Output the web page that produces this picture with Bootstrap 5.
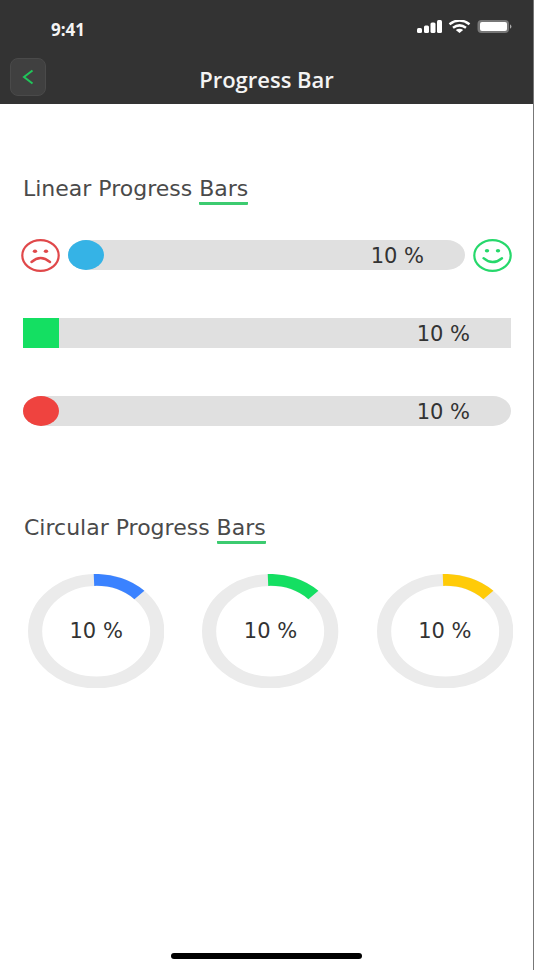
<!DOCTYPE html>
<html lang="en">
<head>
<meta charset="utf-8">
<meta name="viewport" content="width=device-width, initial-scale=1">
<title>Progress Bar</title>
<link href="https://cdn.jsdelivr.net/npm/bootstrap@5.3.0/dist/css/bootstrap.min.css" rel="stylesheet">
<style>
  body { font-family: "DejaVu Sans", sans-serif; color: #333; background: #fff; }
  .screen { border-right: 1px solid #777; }
  .topbar { background: #333; color: #fff; height: 104px; }
  .status { height: 58px; padding: 20px 20px 0 51px; }
  .clock { font: 700 17px/20px "Open Sans", sans-serif; color: #f4f4f4; }
  .titlebar { padding: 0 10px; display: grid; grid-template-columns: 36px 1fr 36px; height: 38px; }
  .back { width: 36px; height: 38px; background: #404040; border: 1px solid #4a4a4a; border-radius: 8px; }
  .page-title { font: 600 22px/38px "Open Sans", sans-serif; color: #f4f4f4; padding-top: 2px; }
  .linear { padding: 72px 22px 0 23px; }
  .circular { padding: 89px 20px 0 28px; }
  .section-title { font-size: 22px; line-height: 26px; color: #4a4a4a; }
  .underlined { border-bottom: 3px solid #3ccb70; border-radius: 1px; display: inline-block; }
  .circular .section-title { margin-left: -4px; }
  .meters { display: grid; gap: 48px; margin-top: 35px; }
  .with-faces { margin: 0 -1px 0 -2px; gap: 8px; }
  .face { flex: none; margin: -2px 0; }
  .meter { height: 30px; background: #e0e0e0; border-radius: 18px / 15px; overflow: visible; }
  .meter.square, .meter.square .progress-bar { border-radius: 0; }
  .meter .progress-bar { border-radius: 50%; min-width: 36px; }
  .reading { font-size: 21px; line-height: 32px; color: #333; }
  .meter .reading { margin: 0 41px 0 auto; }
  .sky { background: #35b3e6; } .leaf { background: #14df62; } .coral { background: #ef433f; }
  .rings { gap: 38px; margin-top: 30px; }
  .ring { position: relative; aspect-ratio: 137 / 115; }
  .ring svg { width: 100%; height: 100%; display: block; }
  .ring .reading { position: absolute; inset: 0; }
  .home { width: 191px; height: 6px; border-radius: 3px; background: #000; margin-bottom: 11px; }
</style>
</head>
<body>
<div class="screen min-vh-100 d-flex flex-column">
  <header class="topbar">
    <div class="status d-flex justify-content-between align-items-start">
      <span class="clock">9:41</span>
      <svg width="96" height="15" viewBox="0 0 96 15" fill="#fff" aria-hidden="true">
        <rect x="0" y="8" width="5" height="5" rx="1.5"/><rect x="7" y="5.500" width="5" height="7.500" rx="1.500"/><rect x="13.500" y="2.500" width="5" height="10.500" rx="1.500"/><rect x="20" y="0" width="5" height="13" rx="1.500"/>
        <g fill="none" stroke="#fff" stroke-width="2.500"><path d="M32.500 4.300Q42.500-3.200 52.500 4.300M36 7.700Q42.500 3 49 7.700"/></g>
        <path d="M38.800 10Q42.500 7.400 46.200 10L42.500 13Z"/>
        <rect x="60.500" y="0" width="31.500" height="13" rx="4" fill="#777"/><rect x="63" y="2" width="27" height="9" rx="2"/><path d="M93 4.200Q96 6.500 93 8.800Z" fill="#aaa"/>
      </svg>
    </div>
    <div class="titlebar">
      <button class="back p-0 d-flex align-items-center justify-content-center" type="button" aria-label="Back">
        <svg width="12" height="16" viewBox="0 0 12 16" fill="none" stroke="#20c65a" stroke-width="2"><path d="M10.500 1.500L2 8L10.500 14.500"/></svg>
      </button>
      <h1 class="page-title m-0 text-center">Progress Bar</h1>
    </div>
  </header>
  <main class="flex-grow-1">
    <section class="linear">
      <h2 class="section-title m-0 fw-normal">Linear Progress <span class="underlined">Bars</span></h2>
      <div class="meters">
        <div class="with-faces d-flex align-items-center">
          <svg class="face" width="39" height="33" viewBox="0 0 39 33" fill="none" stroke="#e0484a" stroke-width="2.200" aria-hidden="true"><ellipse cx="19.500" cy="16.500" rx="18.200" ry="15.300"/><path d="M10.500 23Q19.500 15 29 23" stroke-width="2.400" stroke-linecap="round"/><g fill="#e0484a" stroke="none"><ellipse cx="14" cy="12.300" rx="2.200" ry="1.800"/><ellipse cx="25" cy="12.300" rx="2.200" ry="1.800"/></g></svg>
          <div class="progress meter flex-grow-1" role="progressbar" aria-label="Mood" aria-valuenow="10" aria-valuemin="0" aria-valuemax="100"><div class="progress-bar sky"></div><span class="reading">10 %</span></div>
          <svg class="face" width="39" height="33" viewBox="0 0 39 33" fill="none" stroke="#26d86b" stroke-width="2.200" aria-hidden="true"><ellipse cx="19.500" cy="16.500" rx="18.200" ry="15.300"/><path d="M10.500 19.200Q19.500 27 29 19.200" stroke-width="2.400" stroke-linecap="round"/><g fill="#26d86b" stroke="none"><ellipse cx="14" cy="11.700" rx="2.200" ry="1.800"/><ellipse cx="25" cy="11.700" rx="2.200" ry="1.800"/></g></svg>
        </div>
        <div class="progress meter square" role="progressbar" aria-label="Square" aria-valuenow="10" aria-valuemin="0" aria-valuemax="100"><div class="progress-bar leaf"></div><span class="reading">10 %</span></div>
        <div class="progress meter" role="progressbar" aria-label="Rounded" aria-valuenow="10" aria-valuemin="0" aria-valuemax="100"><div class="progress-bar coral"></div><span class="reading">10 %</span></div>
      </div>
    </section>
    <section class="circular">
      <h2 class="section-title mb-0 fw-normal">Circular Progress <span class="underlined">Bars</span></h2>
      <div class="rings d-flex">
        <div class="ring flex-fill"><svg viewBox="0 0 100 100" preserveAspectRatio="none" fill="none" stroke-width="10.400" aria-hidden="true"><circle cx="50" cy="50" r="44.800" stroke="#ebebeb"/><path d="M48.400 5.200A44.800 44.800 0 0 1 81.700 18.300" stroke="#3a82ff"/></svg><span class="reading d-flex align-items-center justify-content-center">10 %</span></div>
        <div class="ring flex-fill"><svg viewBox="0 0 100 100" preserveAspectRatio="none" fill="none" stroke-width="10.400" aria-hidden="true"><circle cx="50" cy="50" r="44.800" stroke="#ebebeb"/><path d="M48.400 5.200A44.800 44.800 0 0 1 81.700 18.300" stroke="#14df62"/></svg><span class="reading d-flex align-items-center justify-content-center">10 %</span></div>
        <div class="ring flex-fill"><svg viewBox="0 0 100 100" preserveAspectRatio="none" fill="none" stroke-width="10.400" aria-hidden="true"><circle cx="50" cy="50" r="44.800" stroke="#ebebeb"/><path d="M48.400 5.200A44.800 44.800 0 0 1 81.700 18.300" stroke="#ffcb08"/></svg><span class="reading d-flex align-items-center justify-content-center">10 %</span></div>
      </div>
    </section>
  </main>
  <div class="home mx-auto"></div>
</div>
<script src="https://cdn.jsdelivr.net/npm/bootstrap@5.3.0/dist/js/bootstrap.bundle.min.js"></script>
</body>
</html>
